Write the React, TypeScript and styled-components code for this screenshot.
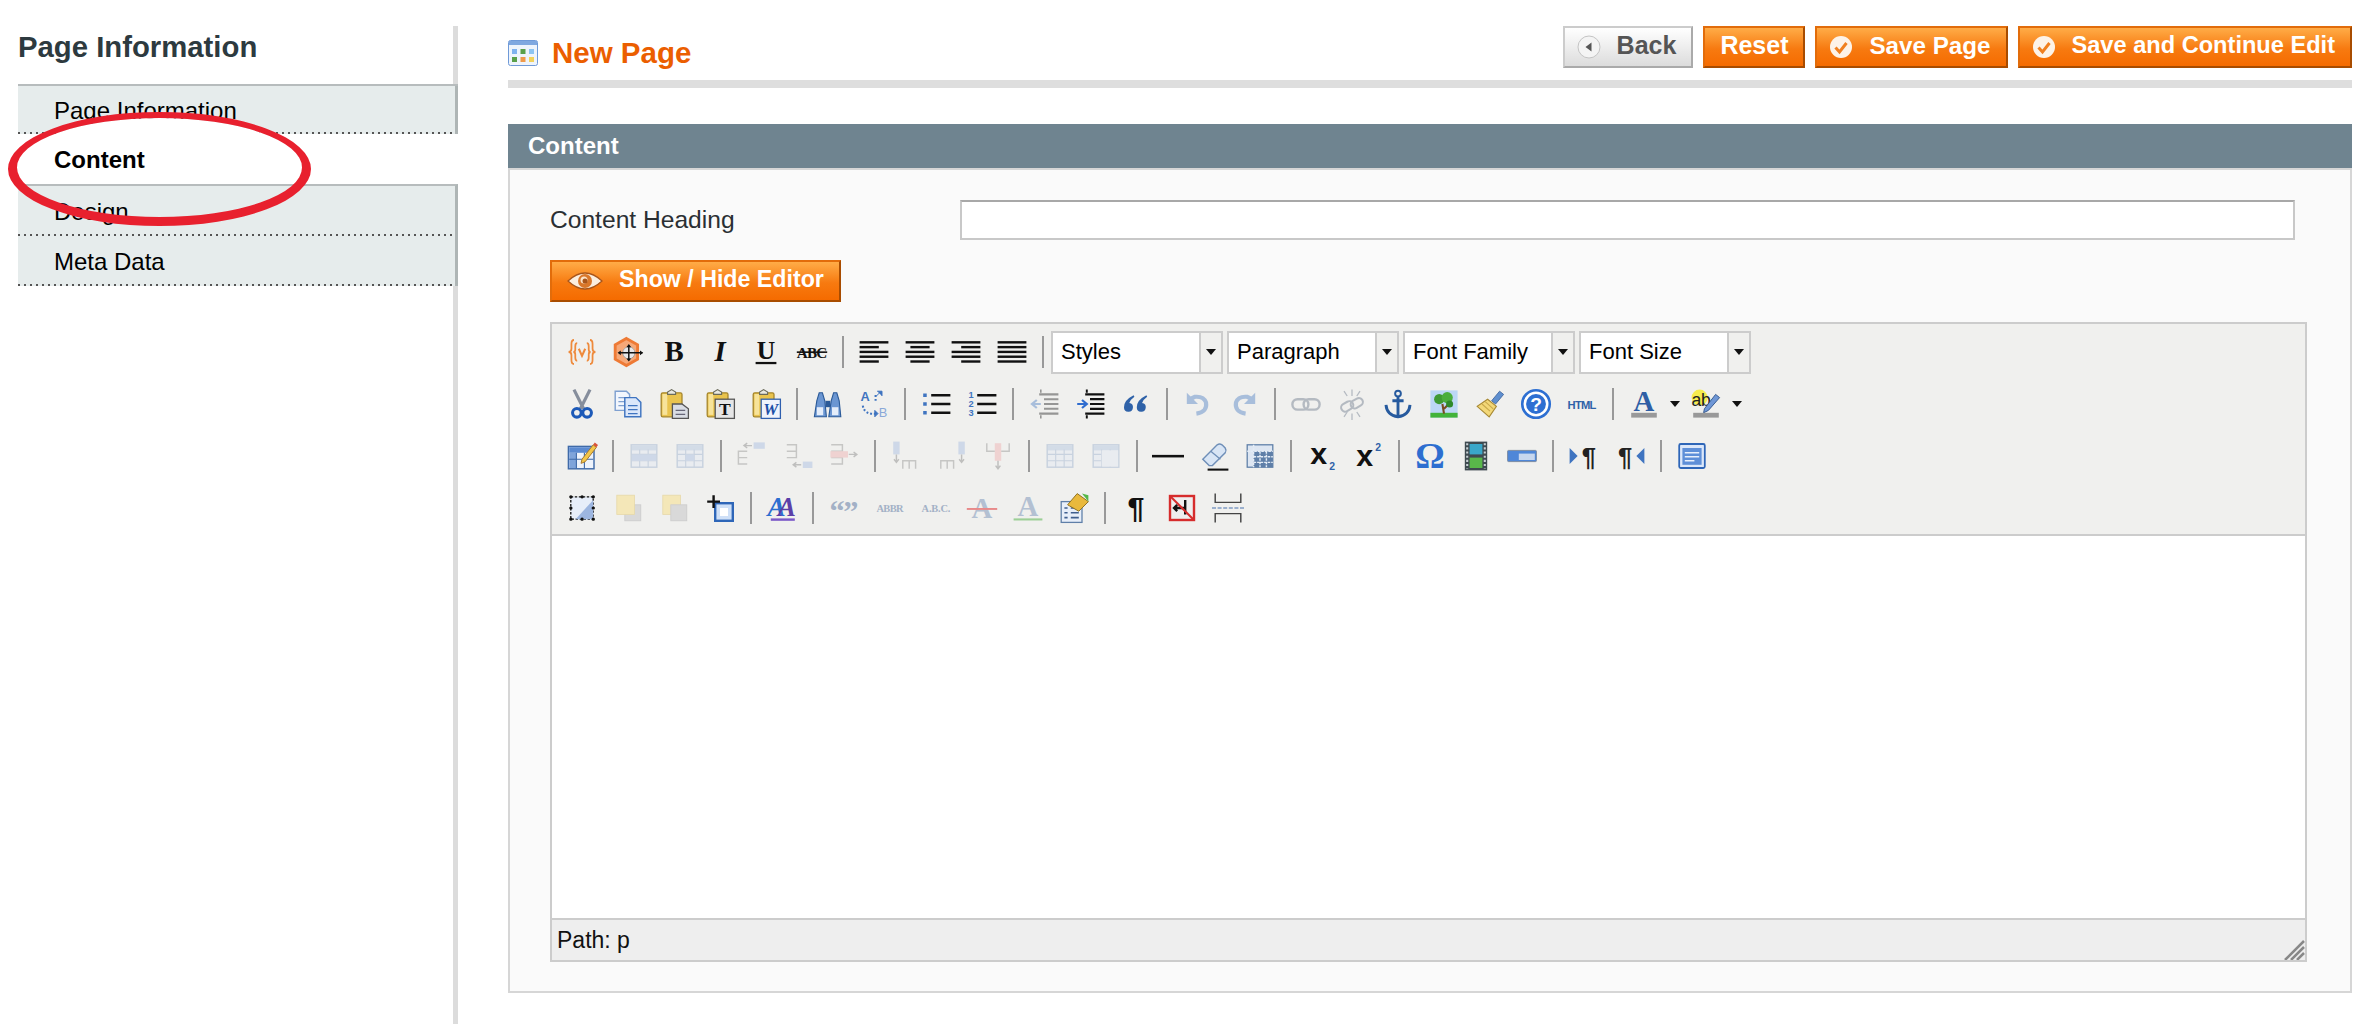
import { ReactNode } from "react";
import styled, { createGlobalStyle } from "styled-components";

const GlobalStyle = createGlobalStyle`
  html, body {
    margin: 0;
    background: #fff;
    font-family: "Liberation Sans", Arial, sans-serif;
    overflow: hidden;
  }
`;

const SERIF = "Liberation Serif, serif";
const SANS = "Liberation Sans, sans-serif";

/* icon helpers */
const Lines = ({ rows, color = "#111" }: { rows: [number, number][]; color?: string }) => (
  <>
    {rows.map(([x, w], i) => (
      <rect key={i} x={x} y={3.2 + i * 3} width={w} height="1.5" fill={color} />
    ))}
  </>
);

const Clipboard = ({ children }: { children?: ReactNode }) => (
  <>
    <rect x="2" y="3" width="13" height="15" rx="1" fill="#e9c34d" stroke="#a5852b" strokeWidth=".8" />
    <rect x="2.8" y="3.8" width="3" height="13" fill="#f7e39a" />
    <path d="M6 4V2.5L8.5 1 11 2.5V4z" fill="#e8e8e0" stroke="#6a6a5a" strokeWidth=".7" />
    {children}
  </>
);

const Grid = ({ hi, head = true }: { hi?: boolean; head?: boolean }) => (
  <>
    <rect x="2" y="3" width="16" height="14" fill="#dfe7f3" stroke="#8ea6c9" strokeWidth=".9" />
    {head && <rect x="2.5" y="3.5" width="15" height="3" fill="#a9bfdf" />}
    <path d="M2 9h16M2 13h16M7.3 6v11M12.6 6v11" stroke="#8ea6c9" strokeWidth=".7" />
    {hi && <rect x="7.3" y="9" width="5.3" height="4" fill="#9db6e0" />}
  </>
);

const Rung = ({ d }: { d: string }) => <path d={d} fill="none" stroke="#888" strokeWidth=".9" />;

const Pen = () => (
  <>
    <path d="M10 12l7-9 2 1.6-7 9-2.6 1z" fill="#f2c64a" stroke="#a5762b" strokeWidth=".6" />
    <path d="M17 3l1-1.4 2 1.6-1 1.4z" fill="#d9533a" />
  </>
);

const icons: Record<string, ReactNode> = {
  widget: (
    <g fill="none" stroke="#ee8a3c" strokeWidth="1.1">
      <path d="M5 2.5Q3.4 2.5 3.4 5V8Q3.4 10 1.6 10 3.4 10 3.4 12V15Q3.4 17.5 5 17.5" />
      <path d="M7 4.5Q5.8 4.5 5.8 6.5V8.5Q5.8 10 4.6 10 5.8 10 5.8 11.5V13.5Q5.8 15.5 7 15.5" />
      <path d="M15 2.5Q16.6 2.5 16.6 5V8Q16.6 10 18.4 10 16.6 10 16.6 12V15Q16.6 17.5 15 17.5" />
      <path d="M13 4.5Q14.2 4.5 14.2 6.5V8.5Q14.2 10 15.4 10 14.2 10 14.2 11.5V13.5Q14.2 15.5 13 15.5" />
      <path d="M8 8l2 4.4L12 8" strokeWidth="1.3" />
    </g>
  ),
  media: (
    <>
      <path d="M9 1.5l7 4v9l-7 4-7-4v-9z" fill="#f6a878" stroke="#ee7a35" strokeWidth="1.8" />
      <circle cx="10.5" cy="10.5" r="3.8" fill="#e8e8ea" stroke="#999" strokeWidth=".5" />
      <path d="M10.5 6v9M5 10.5h14" stroke="#111" strokeWidth=".9" fill="none" />
      <path d="M3.5 10.5l2-1.5v3zM19.5 10.5l-2-1.5v3zM10.5 5L9 7h3zM10.5 16L9 14h3z" fill="#111" />
    </>
  ),
  bold: <text x="10" y="15.5" textAnchor="middle" fontFamily={SERIF} fontWeight="bold" fontSize="18" fill="#111">B</text>,
  italic: <text x="10" y="15.5" textAnchor="middle" fontFamily={SERIF} fontWeight="bold" fontStyle="italic" fontSize="18" fill="#111">I</text>,
  underline: (
    <>
      <text x="10" y="14.5" textAnchor="middle" fontFamily={SERIF} fontWeight="bold" fontSize="16" fill="#111">U</text>
      <rect x="3.5" y="16.2" width="13" height="1.4" fill="#111" />
    </>
  ),
  strike: (
    <>
      <text x="10" y="13.5" textAnchor="middle" fontFamily={SERIF} fontWeight="bold" fontSize="9.5" textLength="19" fill="#111">ABC</text>
      <rect x="0.5" y="9.6" width="19" height="1" fill="#111" />
    </>
  ),
  left: <Lines rows={[[1, 18], [1, 12], [1, 18], [1, 18], [1, 12]]} />,
  center: <Lines rows={[[1, 18], [4, 12], [1, 18], [1, 18], [4, 12]]} />,
  right: <Lines rows={[[1, 18], [7, 12], [1, 18], [1, 18], [7, 12]]} />,
  justify: <Lines rows={[[1, 18], [1, 18], [1, 18], [1, 18], [1, 18]]} />,
  cut: (
    <>
      <path d="M5 1l6 12M15 1L9 13" stroke="#868e9c" strokeWidth="2" />
      <circle cx="6.8" cy="15.5" r="2.7" fill="none" stroke="#1d5ab8" strokeWidth="1.9" />
      <circle cx="13.2" cy="15.5" r="2.7" fill="none" stroke="#1d5ab8" strokeWidth="1.9" />
    </>
  ),
  copy: (
    <>
      <path d="M2 2h7l2 2v10H2z" fill="#f2f6fd" stroke="#7fa0d0" strokeWidth=".9" />
      <path d="M4 6h5M4 8.5h5M4 11h5" stroke="#7fa0d0" strokeWidth=".8" />
      <path d="M8 6h7l3 3v9H8z" fill="#dbe7fa" stroke="#3f74c0" strokeWidth=".9" />
      <path d="M10 11h6M10 13.5h6M10 16h6" stroke="#3f74c0" strokeWidth=".8" />
    </>
  ),
  paste: (
    <Clipboard>
      <path d="M9 10h6l4 3v6H9z" fill="#d9dde4" stroke="#555" strokeWidth=".8" />
      <path d="M11 14h6M11 16.5h6" stroke="#667" strokeWidth=".8" />
    </Clipboard>
  ),
  pasteText: (
    <Clipboard>
      <rect x="7" y="7" width="12" height="12" fill="#e6e6e6" stroke="#555" strokeWidth=".8" />
      <text x="13" y="17" textAnchor="middle" fontFamily={SERIF} fontWeight="bold" fontSize="11" fill="#111">T</text>
    </Clipboard>
  ),
  pasteWord: (
    <Clipboard>
      <rect x="7" y="7" width="12" height="12" fill="#eef3fc" stroke="#2f5fae" strokeWidth=".8" />
      <text x="13" y="17" textAnchor="middle" fontFamily={SERIF} fontWeight="bold" fontStyle="italic" fontSize="10.5" fill="#1c50a8">W</text>
    </Clipboard>
  ),
  find: (
    <>
      <path d="M3 8l1.5-5h2L8 8l1 10H1.5z" fill="#6b96d2" stroke="#2b5a98" strokeWidth=".7" />
      <path d="M12 8l1.5-5h2L17 8l1 10h-7.5z" fill="#6b96d2" stroke="#2b5a98" strokeWidth=".7" />
      <rect x="8.4" y="8" width="3" height="4" fill="#2b5a98" />
      <rect x="3" y="12" width="4" height="5" fill="#e4edfa" />
      <rect x="12.5" y="12" width="4" height="5" fill="#e4edfa" />
    </>
  ),
  replace: (
    <>
      <text x="1.5" y="8" fontFamily={SANS} fontWeight="bold" fontSize="8" fill="#3f74c0">A</text>
      <text x="13" y="18" fontFamily={SANS} fontSize="8" fill="#8aa8d8">B</text>
      <path d="M11 8V4M3 11Q4 17 12 16" fill="none" stroke="#3f74c0" strokeWidth="1.3" strokeDasharray="1.2 1.2" />
      <path d="M11.5 5l3-3M12 2h3v3M10.5 14l2 2-2 2z" fill="#3f74c0" stroke="#3f74c0" strokeWidth=".6" />
    </>
  ),
  ul: (
    <>
      <path d="M2 4.5h3M2 10h3M2 15.5h3" stroke="#3f74c0" strokeWidth="2.2" strokeDasharray="2.2 .8" />
      <path d="M7 4.5h12M7 10h12M7 15.5h12" stroke="#111" strokeWidth="1.5" />
    </>
  ),
  ol: (
    <>
      <g fontFamily={SANS} fontWeight="bold" fontSize="5.8" fill="#3f74c0">
        <text x="1.5" y="6.5">1</text>
        <text x="1.5" y="12">2</text>
        <text x="1.5" y="17.5">3</text>
      </g>
      <path d="M7 4.5h12M7 10h12M7 15.5h12" stroke="#111" strokeWidth="1.5" />
    </>
  ),
  outdent: (
    <>
      <path d="M7 4h12M10 7h9M10 10h9M10 13h9M7 16h12" stroke="#111" strokeWidth="1.3" />
      <path d="M8 10H3M5.5 7.5L2.5 10l3 2.5" fill="none" stroke="#3f74c0" strokeWidth="1.4" />
      <path d="M8 1v2M8 17v2" stroke="#111" strokeWidth="1" />
    </>
  ),
  indent: (
    <>
      <path d="M7 4h12M10 7h9M10 10h9M10 13h9M7 16h12" stroke="#111" strokeWidth="1.4" />
      <path d="M2 10h5M5 7.5L8 10l-3 2.5" fill="none" stroke="#2f6ccf" strokeWidth="1.4" />
      <path d="M8 1v2M8 17v2" stroke="#111" strokeWidth="1.2" />
    </>
  ),
  quote: (
    <path
      fill="#2f62a8"
      d="M8.5 4.5Q2.5 7.5 2.5 12a2.8 2.8 0 1 0 3.300-2.700Q6.300 7.500 9 5.500zM16.500 4.500Q10.500 7.500 10.500 12a2.800 2.800 0 1 0 3.300-2.700Q14.300 7.500 17 5.500z"
    />
  ),
  undo: (
    <>
      <path d="M9 16q7-1 6-7-1.4-4-7-3.5L5 7" fill="none" stroke="#3f74c0" strokeWidth="2.6" />
      <path d="M3 3v7h7z" fill="#3f74c0" />
    </>
  ),
  redo: (
    <>
      <path d="M11 16q-7-1-6-7 1.4-4 7-3.5L15 7" fill="none" stroke="#3f74c0" strokeWidth="2.6" />
      <path d="M17 3v7h-7z" fill="#3f74c0" />
    </>
  ),
  link: (
    <g fill="none" stroke="#5d6b80" strokeWidth="1.5">
      <rect x="1.5" y="7" width="10" height="6.5" rx="3.2" />
      <rect x="8.5" y="7" width="10" height="6.5" rx="3.2" />
    </g>
  ),
  unlink: (
    <g fill="none" stroke="#5d6b80" strokeWidth="1.3">
      <rect x="3" y="9" width="8" height="5" rx="2.5" transform="rotate(-30 7 11.5)" />
      <rect x="9" y="7" width="8" height="5" rx="2.5" transform="rotate(-30 13 9.5)" />
      <path d="M10 1v4M5 2l2 3M15 2l-2 3M10 16v4M5 18l2-3M15 18l-2-3" strokeWidth=".8" />
    </g>
  ),
  anchor: (
    <g fill="none" stroke="#265a9e" strokeWidth="1.8">
      <circle cx="10" cy="3.5" r="1.8" strokeWidth="1.2" />
      <path d="M10 5v13M6.5 8h7" />
      <path d="M2.500 10.500Q3 17 10 18 17 17 17.500 10.500" />
    </g>
  ),
  image: (
    <>
      <rect x="1.5" y="1.5" width="17" height="17" fill="#bcd7f5" />
      <rect x="1.5" y="15.5" width="17" height="3" fill="#43b33a" />
      <path d="M10 16l-1-6M10 13l3-3" stroke="#7a4a20" strokeWidth="1.3" />
      <circle cx="7" cy="7" r="3.2" fill="#3f9a34" />
      <circle cx="12" cy="6" r="3.5" fill="#4bae3c" />
      <circle cx="13.5" cy="10" r="2.2" fill="#2e8a2b" />
    </>
  ),
  cleanup: (
    <>
      <path d="M11 8l5-6 2.500 2-5 6z" fill="#5f8fcf" stroke="#3a5f99" strokeWidth=".5" />
      <path d="M8.500 7L14 11.500 9.500 18 2 11.500z" fill="#f3d878" stroke="#a88a35" strokeWidth=".7" />
      <path d="M5 10l5 4.500M7 8.500l5 4.500" stroke="#c9a94a" strokeWidth=".7" />
    </>
  ),
  help: (
    <>
      <circle cx="10" cy="10" r="8.6" fill="#fff" stroke="#2d6fd2" strokeWidth="1.6" />
      <circle cx="10" cy="10" r="6.2" fill="#2d6fd2" />
      <text x="10" y="14.5" textAnchor="middle" fontFamily={SANS} fontWeight="bold" fontSize="12" fill="#fff">?</text>
    </>
  ),
  html: <text x="10" y="13" textAnchor="middle" fontFamily={SANS} fontWeight="bold" fontSize="7" textLength="18" fill="#2f62a8">HTML</text>,
  fore: (
    <>
      <text x="10" y="14.5" textAnchor="middle" fontFamily={SERIF} fontWeight="bold" fontSize="18" fill="#2f5fa5">A</text>
      <rect x="2" y="15.5" width="16" height="3" fill="#999" />
    </>
  ),
  back: (
    <>
      <circle cx="6" cy="6" r="5" fill="#f6ec4e" />
      <text x="1" y="11" fontFamily={SANS} fontSize="11" fill="#222" textLength="12">ab</text>
      <path d="M9 13l7-9 2.500 2-7 8-3 1.500z" fill="#6f97d6" stroke="#34598f" strokeWidth=".6" />
      <rect x="2" y="15.5" width="16" height="3" fill="#999" />
    </>
  ),
  tableProps: (
    <>
      <rect x="1.5" y="4" width="16" height="14" fill="#eef3fb" stroke="#3f6aa8" strokeWidth=".9" />
      <rect x="2" y="4.5" width="15" height="3.5" fill="#5b8ad0" />
      <rect x="2" y="8" width="4.5" height="9.5" fill="#7fa4da" />
      <path d="M2 12h15M6.500 8v10M11.500 8v10" stroke="#3f6aa8" strokeWidth=".7" />
      <Pen />
    </>
  ),
  rowProps: (
    <>
      <Grid />
      <rect x="2.5" y="9" width="15" height="4" fill="#9db6e0" />
    </>
  ),
  cellProps: <Grid hi />,
  rowBefore: (
    <>
      <rect x="11" y="1.5" width="7" height="4" fill="#9db6e0" />
      <path d="M10 3.500H5M7 2L5 3.500 7 5" fill="none" stroke="#777" strokeWidth=".9" />
      <Rung d="M7 7H1.500v4H7M1.500 11v4H7" />
    </>
  ),
  rowAfter: (
    <>
      <Rung d="M3 3h6v4H3M9 7v4H3" />
      <rect x="13" y="13.5" width="6" height="4" fill="#9db6e0" />
      <path d="M12 15.500H7M9 14l-2 1.500L9 17" fill="none" stroke="#777" strokeWidth=".9" />
    </>
  ),
  rowDel: (
    <>
      <Rung d="M2 3h7v4H2M2 11h7v4H2" />
      <rect x="1.5" y="7" width="11" height="4" fill="#eea7a7" />
      <path d="M13 9h5M16 7.500L18 9l-2 1.500" fill="none" stroke="#777" strokeWidth=".9" />
    </>
  ),
  colBefore: (
    <>
      <rect x="2" y="1" width="4" height="8" fill="#9db6e0" />
      <path d="M4 9v5M2.500 12L4 14l1.500-2" fill="none" stroke="#777" strokeWidth=".9" />
      <Rung d="M8 18v-5h8v5M12 13v5" />
    </>
  ),
  colAfter: (
    <>
      <rect x="14" y="1" width="4" height="8" fill="#9db6e0" />
      <path d="M16 9v5M14.500 12L16 14l1.500-2" fill="none" stroke="#777" strokeWidth=".9" />
      <Rung d="M3 18v-5h8v5M7 13v5" />
    </>
  ),
  colDel: (
    <>
      <rect x="8" y="2" width="4" height="11" fill="#eea7a7" />
      <Rung d="M3 2v5h5M17 2v5h-5" />
      <path d="M10 13v5M8.500 16l1.500 2 1.500-2" fill="none" stroke="#777" strokeWidth=".9" />
    </>
  ),
  split: <Grid />,
  merge: (
    <>
      <Grid />
      <rect x="7.3" y="6.5" width="10.3" height="10.1" fill="#dfe7f3" />
    </>
  ),
  hr: <rect x="0" y="9.3" width="20" height="1.6" fill="#111" />,
  eraser: (
    <>
      <path d="M3 12l9-9q1.500-1 3 0l2 2q1 1.500 0 3l-8 8H7z" fill="#d8e5f5" stroke="#6f8fb8" strokeWidth=".9" />
      <path d="M8 7l6 5" stroke="#6f8fb8" strokeWidth=".8" />
      <path d="M6 18.500h13" stroke="#111" strokeWidth="1.3" />
    </>
  ),
  visual: (
    <>
      <rect x="2" y="3" width="16" height="14" fill="#dde6f2" stroke="#5f7fa8" strokeWidth=".8" />
      <rect x="6" y="7" width="12" height="10" fill="#5f7fa8" />
      <path d="M2 7h16M6 10.500h12M6 14h12M6 3v14M10 7v10M14 7v10" stroke="#e4ecf5" strokeWidth=".9" strokeDasharray="1.6 .6" />
    </>
  ),
  sub: (
    <>
      <text x="8" y="15" textAnchor="middle" fontFamily={SANS} fontWeight="bold" fontSize="19" fill="#111">x</text>
      <text x="14.5" y="18.5" fontFamily={SANS} fontWeight="bold" fontSize="6.5" fill="#2f62a8">2</text>
    </>
  ),
  sup: (
    <>
      <text x="8" y="16" textAnchor="middle" fontFamily={SANS} fontWeight="bold" fontSize="19" fill="#111">x</text>
      <text x="14.5" y="7" fontFamily={SANS} fontWeight="bold" fontSize="6.5" fill="#2f62a8">2</text>
    </>
  ),
  omega: <text x="10" y="17.5" textAnchor="middle" fontFamily={SERIF} fontWeight="bold" fontSize="23" fill="#2d6ed0">Ω</text>,
  film: (
    <>
      <rect x="3" y="1" width="14" height="18" fill="#3f4a50" />
      <rect x="6" y="2.5" width="8" height="6.5" fill="#3aa7c9" />
      <rect x="6" y="11" width="8" height="6.5" fill="#59b84a" />
      <path d="M4.500 2v16M15.500 2v16" stroke="#c8d0d4" strokeWidth="1.3" strokeDasharray="1.3 1.3" />
    </>
  ),
  bar: (
    <>
      <rect x="1" y="6.5" width="18" height="7" rx=".6" fill="#4f87d8" stroke="#7b8aa0" strokeWidth=".6" />
      <rect x="8" y="8.5" width="10" height="4" fill="#c7d7ee" />
    </>
  ),
  ltr: (
    <>
      <path d="M1 5l5 5-5 5z" fill="#3f74c0" />
      <text x="13" y="16" textAnchor="middle" fontFamily={SANS} fontWeight="bold" fontSize="16" fill="#222">¶</text>
    </>
  ),
  rtl: (
    <>
      <text x="7" y="16" textAnchor="middle" fontFamily={SANS} fontWeight="bold" fontSize="16" fill="#222">¶</text>
      <path d="M19 5l-5 5 5 5z" fill="#3f74c0" />
    </>
  ),
  full: (
    <>
      <rect x="2" y="2.5" width="16" height="15" rx="1" fill="#dbe7fa" stroke="#2e66b8" strokeWidth="1.1" />
      <rect x="4" y="5" width="12" height="10.5" fill="#5e8fd8" />
      <path d="M5.500 8h9M5.500 10.500h9M5.500 13h6" stroke="#e8f0fb" strokeWidth=".9" />
    </>
  ),
  layer: (
    <>
      <rect x="3" y="3" width="14" height="14" fill="#e7eef9" stroke="#111" strokeWidth=".8" strokeDasharray="1.5 1" />
      <path d="M17 17L6 17 17 5z" fill="#9db6e0" />
      <path d="M3 3h.1M10 3h.1M17 3h.1M3 10h.1M17 10h.1M3 17h.1M10 17h.1M17 17h.1" stroke="#111" strokeWidth="2" strokeLinecap="round" />
    </>
  ),
  forward: (
    <>
      <rect x="8" y="8" width="10" height="10" fill="#d9d9d9" stroke="#ccc" strokeWidth=".5" />
      <rect x="3" y="2" width="11" height="12" fill="#f4e7b8" stroke="#e6d9a8" strokeWidth=".5" />
    </>
  ),
  backward: (
    <>
      <rect x="3" y="2" width="11" height="12" fill="#f4e7b8" stroke="#e6d9a8" strokeWidth=".5" />
      <rect x="8" y="8" width="10" height="10" fill="#d9d9d9" stroke="#ccc" strokeWidth=".5" />
    </>
  ),
  absolute: (
    <>
      <rect x="7" y="7" width="11" height="11" fill="#cfe0f7" stroke="#2e66b8" strokeWidth="1.5" />
      <rect x="10" y="10" width="5" height="5" fill="#fff" />
      <path d="M6 2v8M2 6h8" stroke="#111" strokeWidth="1.5" />
    </>
  ),
  styleProps: (
    <>
      <text x="1" y="15" fontFamily={SERIF} fontWeight="bold" fontStyle="italic" fontSize="17" fill="#2d6ed0" letterSpacing="-5">
        A<tspan fill="#5b3fa8">A</tspan>
      </text>
      <rect x="3" y="16.5" width="15" height="1.5" fill="#7a58c8" />
    </>
  ),
  cite: <text x="10" y="18" textAnchor="middle" fontFamily={SERIF} fontWeight="bold" fontSize="19" textLength="18" fill="#a3b1c6">“”</text>,
  abbr: <text x="10" y="12.5" textAnchor="middle" fontFamily={SERIF} fontSize="6.5" fontWeight="bold" textLength="17" fill="#a3b1c6">ABBR</text>,
  acronym: <text x="10" y="12.5" textAnchor="middle" fontFamily={SERIF} fontSize="6.5" fontWeight="bold" textLength="18" fill="#a3b1c6">A.B.C.</text>,
  del: (
    <>
      <text x="10" y="16" textAnchor="middle" fontFamily={SERIF} fontWeight="bold" fontSize="18" fill="#b3c0d2">A</text>
      <rect x="0.5" y="10" width="19" height="1.2" fill="#e88a8a" />
    </>
  ),
  ins: (
    <>
      <text x="10" y="15" textAnchor="middle" fontFamily={SERIF} fontWeight="bold" fontSize="18" fill="#b3c0d2">A</text>
      <rect x="1" y="16.5" width="18" height="1.3" fill="#9ccf96" />
    </>
  ),
  attribs: (
    <>
      <rect x="2" y="6" width="13" height="13" fill="#e7eef9" stroke="#5f7fa8" strokeWidth=".8" />
      <path d="M4 10h2M8 10h5M4 13h2M8 13h5M4 16h2M8 16h5" stroke="#3f5f8f" strokeWidth="1" />
      <path d="M6 8l6-7 7 5-6 6z" fill="#e9b93c" stroke="#8c6f20" strokeWidth=".6" />
      <path d="M15 1l4 1v4z" fill="#55b84a" />
    </>
  ),
  pilcrow: <text x="10" y="16.5" textAnchor="middle" fontFamily={SANS} fontWeight="bold" fontSize="19" fill="#111">¶</text>,
  nonbreak: (
    <>
      <rect x="2.5" y="2.5" width="15" height="15" fill="#eee" stroke="#d62c2c" strokeWidth="1.5" />
      <path d="M12 5v9M12 10H5M7 8l-2 2 2 2" fill="none" stroke="#111" strokeWidth="1.5" />
      <path d="M3 3l14 14" stroke="#d62c2c" strokeWidth="1.3" />
    </>
  ),
  pagebreak: (
    <g fill="none" stroke="#444" strokeWidth=".9">
      <path d="M2 1v5.500h16V1M2 19v-5.500h16V19" />
      <path d="M0 10h20" stroke="#7f9ac4" strokeWidth="1" strokeDasharray="2.5 1" />
    </g>
  ),
};

const dimmed = new Set([
  "outdent", "undo", "redo", "link", "unlink", "rowProps", "cellProps", "rowBefore", "rowAfter", "rowDel",
  "colBefore", "colAfter", "colDel", "split", "merge",
]);

const rows: string[][] = [
  ["widget", "media", "bold", "italic", "underline", "strike", "|", "left", "center", "right", "justify", "|", "@lists"],
  ["cut", "copy", "paste", "pasteText", "pasteWord", "|", "find", "replace", "|", "ul", "ol", "|", "outdent", "indent", "quote", "|", "undo", "redo", "|", "link", "unlink", "anchor", "image", "cleanup", "help", "html", "|", "fore", "v", "back", "v"],
  ["tableProps", "|", "rowProps", "cellProps", "|", "rowBefore", "rowAfter", "rowDel", "|", "colBefore", "colAfter", "colDel", "|", "split", "merge", "|", "hr", "eraser", "visual", "|", "sub", "sup", "|", "omega", "film", "bar", "|", "ltr", "rtl", "|", "full"],
  ["layer", "forward", "backward", "absolute", "|", "styleProps", "|", "cite", "abbr", "acronym", "del", "ins", "attribs", "|", "pilcrow", "nonbreak", "pagebreak"],
];

const listBoxes = ["Styles", "Paragraph", "Font Family", "Font Size"];

const CheckIcon = () => (
  <BtnIcon viewBox="0 0 24 24">
    <circle cx="12" cy="12" r="11" fill="#fdf3e8" />
    <path d="M6.5 12.5l4 4.5 7-9" fill="none" stroke="#f08020" strokeWidth="3" />
  </BtnIcon>
);

const App = () => (
  <Page>
    <GlobalStyle />
    <Sidebar>
      <SideTitle>Page Information</SideTitle>
      <Tabs>
        <Tab $h={48}>Page Information</Tab>
        <Tab $h={50} $active>Content</Tab>
        <Tab $h={52} $ruled>Design</Tab>
        <Tab $h={50}>Meta Data</Tab>
      </Tabs>
      <Scribble viewBox="0 0 330 250">
        <defs>
          <clipPath id="above-active">
            <rect x="0" y="0" width="330" height="134" />
          </clipPath>
        </defs>
        <ellipse cx="159.5" cy="167.5" rx="142.5" ry="49.5" fill="#fff" clipPath="url(#above-active)" />
        <path
          fillRule="evenodd"
          fill="#e8202e"
          d="M8 169a151.5 57 0 1 0 303 0a151.5 57 0 1 0-303 0zM17 167.5a142.5 49.5 0 1 1 285 0a142.5 49.5 0 1 1-285 0z"
        />
      </Scribble>
    </Sidebar>

    <Main>
      <Header>
        <PageTitle>
          <svg width="30" height="26" viewBox="0 0 30 26">
            <rect x=".5" y=".5" width="29" height="25" rx="2" fill="#eef4fc" stroke="#6f9ad8" />
            <rect x="1" y="1" width="28" height="4" fill="#7fa8e0" />
            <rect x="4" y="9" width="5" height="5" fill="#7fb2ee" />
            <rect x="12.5" y="9" width="5" height="5" fill="#5aa04a" />
            <rect x="21" y="9" width="5" height="5" fill="#8cc4f2" />
            <rect x="4" y="17" width="5" height="5" fill="#5aa04a" />
            <rect x="12.5" y="17" width="5" height="5" fill="#f09a4a" />
            <rect x="21" y="17" width="5" height="5" fill="#f2d25a" />
          </svg>
          New Page
        </PageTitle>
        <Actions>
          <ActionButton $grey $size={25}>
            <BtnIcon viewBox="0 0 24 24">
              <circle cx="12" cy="12" r="11" fill="#f4f4f4" stroke="#c4c4c4" />
              <path d="M14.5 7.5v9L8.5 12z" fill="#555" />
            </BtnIcon>
            Back
          </ActionButton>
          <ActionButton $size={25}>Reset</ActionButton>
          <ActionButton $size={24.2}>
            <CheckIcon />
            Save Page
          </ActionButton>
          <ActionButton $size={23.6}>
            <CheckIcon />
            Save and Continue Edit
          </ActionButton>
        </Actions>
      </Header>

      <PanelHead>Content</PanelHead>
      <PanelBody>
        <FieldRow>
          <FieldLabel>Content Heading</FieldLabel>
          <FieldInput />
        </FieldRow>
        <ToggleRow>
          <ActionButton $size={23.2}>
            <BtnIcon $wide viewBox="0 0 36 24">
              <path d="M1 12Q18-4 35 12 18 28 1 12z" fill="#fbeede" stroke="#a8551a" strokeWidth="1.2" />
              <circle cx="18" cy="12" r="7" fill="#d9772a" />
              <circle cx="17" cy="11" r="3.5" fill="#fbe3c8" />
              <circle cx="18" cy="12" r="2.5" fill="#a8551a" />
            </BtnIcon>
            Show / Hide Editor
          </ActionButton>
        </ToggleRow>
        <Editor>
          <Toolbar>
            {rows.map((row, r) => (
              <ToolRow key={r}>
                {row.map((name, i) => {
                  if (name === "|") return <ToolSep key={i} />;
                  if (name === "v") return <SplitArrow key={i} />;
                  if (name === "@lists")
                    return (
                      <ListBoxes key={i}>
                        {listBoxes.map((t) => (
                          <ListBox key={t}>
                            <ListText>{t}</ListText>
                            <ListOpen />
                          </ListBox>
                        ))}
                      </ListBoxes>
                    );
                  return (
                    <ToolButton key={i} $off={dimmed.has(name)}>
                      <ToolIcon viewBox="0 0 20 20">{icons[name]}</ToolIcon>
                    </ToolButton>
                  );
                })}
              </ToolRow>
            ))}
          </Toolbar>
          <EditArea />
          <StatusBar>
            Path: p
            <svg width="22" height="20" viewBox="0 0 22 20">
              <path d="M2 20L21 1M8 20L21 7M14 20l7-7" stroke="#888" strokeWidth="2.5" />
            </svg>
          </StatusBar>
        </Editor>
      </PanelBody>
    </Main>
  </Page>
);

export default App;

const Page = styled.div`
  display: flex;
  height: 1024px;
  overflow: hidden;
  padding: 26px 0 0 18px;
  box-sizing: border-box;
`;

const Sidebar = styled.aside`
  position: relative;
  width: 435px;
  flex: none;
  border-right: 5px solid #dcdcdc;
`;

const SideTitle = styled.h3`
  margin: 0;
  height: 58px;
  line-height: 42px;
  font-size: 29.3px;
  font-weight: bold;
  color: #2d3a3f;
`;

const Tabs = styled.ul`
  list-style: none;
  margin: 0 -5px 0 0;
  padding: 0;
  border-top: 2px solid #b7bcbd;
`;

const Tab = styled.li<{ $h: number; $active?: boolean; $ruled?: boolean }>`
  box-sizing: border-box;
  display: flex;
  align-items: center;
  height: ${(p) => p.$h}px;
  padding: 2px 0 0 36px;
  font-size: 24px;
  font-weight: ${(p) => (p.$active ? "bold" : "normal")};
  color: #000;
  border-top: ${(p) => (p.$ruled ? "2px solid #b7bcbd" : "none")};
  border-right: 3px solid ${(p) => (p.$active ? "#fff" : "#aeb5b5")};
  background: ${(p) =>
    p.$active
      ? "#fff"
      : "linear-gradient(to right, #555 2px, transparent 2px) left bottom / 6px 2px repeat-x, #e6ecec"};
`;

const Scribble = styled.svg`
  position: absolute;
  left: -18px;
  top: -26px;
  width: 330px;
  height: 250px;
`;

const Main = styled.main`
  width: 1844px;
  margin-left: 50px;
  flex: none;
`;

const Header = styled.header`
  display: flex;
  justify-content: space-between;
  height: 54px;
  border-bottom: 8px solid #dedede;
  margin-bottom: 36px;
`;

const PageTitle = styled.h3`
  display: flex;
  align-items: center;
  gap: 14px;
  height: 42px;
  margin: 6px 0 0;
  font-size: 29.5px;
  font-weight: bold;
  color: #eb5e00;
`;

const Actions = styled.div`
  display: flex;
  gap: 10px;
`;

const ActionButton = styled.button<{ $grey?: boolean; $size?: number }>`
  display: inline-flex;
  align-items: center;
  gap: 16px;
  box-sizing: border-box;
  height: 42px;
  padding: 0 15px 3px;
  font-family: inherit;
  font-size: ${(p) => p.$size ?? 23.3}px;
  font-weight: bold;
  white-space: nowrap;
  color: ${(p) => (p.$grey ? "#555" : "#fff")};
  border-style: solid;
  border-width: 2px;
  border-color: ${(p) =>
    p.$grey ? "#ccc #aaa #aaa #ccc" : "#e26c0a #a84c00 #a84c00 #e26c0a"};
  background: ${(p) =>
    p.$grey
      ? "linear-gradient(to bottom, #fff, #dcdcdc)"
      : "linear-gradient(to bottom, #ffac47, #f77a10 55%, #f56b00)"};
`;

const BtnIcon = styled.svg<{ $wide?: boolean }>`
  width: ${(p) => (p.$wide ? 36 : 24)}px;
  height: 24px;
  flex: none;
  margin: 3px 0 0 ${(p) => (p.$wide ? 0 : -3)}px;
`;

const PanelHead = styled.div`
  height: 44px;
  line-height: 43px;
  padding-left: 20px;
  font-size: 24px;
  font-weight: bold;
  color: #fff;
  background: #6f8490;
`;

const PanelBody = styled.section`
  box-sizing: border-box;
  height: 825px;
  padding: 30px 43px 0 40px;
  background: #fafafa;
  border: 2px solid #d6d6d6;
`;

const FieldRow = styled.div`
  display: flex;
  align-items: center;
  height: 40px;
  padding-right: 12px;
`;

const FieldLabel = styled.label`
  width: 410px;
  flex: none;
  font-size: 24.6px;
  color: #2a2f33;
`;

const FieldInput = styled.input`
  flex: 1;
  box-sizing: border-box;
  height: 40px;
  background: #fff;
  border: 2px solid #c8c8c8;
  border-top-color: #a8a8a8;
`;

const ToggleRow = styled.div`
  margin: 20px 0;
`;

const Editor = styled.div`
  display: flex;
  flex-direction: column;
  height: 640px;
  box-sizing: border-box;
  border: 2px solid #ccc;
`;

const Toolbar = styled.div`
  padding-top: 2px;
  background: #f0f0ee;
  border-bottom: 2px solid #ccc;
`;

const ToolRow = styled.div`
  display: flex;
  align-items: center;
  height: 52px;
  padding-left: 7px;
`;

const ToolButton = styled.span<{ $off?: boolean }>`
  display: flex;
  align-items: center;
  justify-content: center;
  width: 46px;
  height: 46px;
  flex: none;
  opacity: ${(p) => (p.$off ? 0.4 : 1)};
`;

const ToolIcon = styled.svg`
  width: 32px;
  height: 32px;
  overflow: visible;
`;

const ToolSep = styled.span`
  width: 16px;
  flex: none;
  display: flex;
  justify-content: center;

  &::before {
    content: "";
    width: 2px;
    height: 32px;
    background: #999;
  }
`;

const SplitArrow = styled.span`
  width: 16px;
  flex: none;
  display: flex;
  justify-content: center;

  &::before {
    content: "";
    border: 5px solid transparent;
    border-top: 6px solid #111;
    border-bottom: 0;
  }
`;

const ListBoxes = styled.div`
  display: flex;
  gap: 4px;
`;

const ListBox = styled.div`
  display: flex;
  width: 172px;
  height: 43px;
  box-sizing: border-box;
  border: 2px solid #ccc;
`;

const ListText = styled.span`
  flex: 1;
  padding-left: 8px;
  line-height: 38px;
  font-size: 22px;
  color: #000;
  background: #fff;
`;

const ListOpen = styled.span`
  width: 20px;
  display: flex;
  align-items: center;
  justify-content: center;
  background: #f0f0ee;
  border-left: 2px solid #ccc;

  &::before {
    content: "";
    border: 5px solid transparent;
    border-top: 6px solid #111;
    border-bottom: 0;
  }
`;

const EditArea = styled.div`
  flex: 1;
  background: #fff;
`;

const StatusBar = styled.div`
  display: flex;
  justify-content: space-between;
  align-items: center;
  height: 40px;
  padding-left: 5px;
  font-size: 23px;
  color: #111;
  background: #eeeeee;
  border-top: 2px solid #ccc;

  svg {
    align-self: flex-end;
  }
`;
